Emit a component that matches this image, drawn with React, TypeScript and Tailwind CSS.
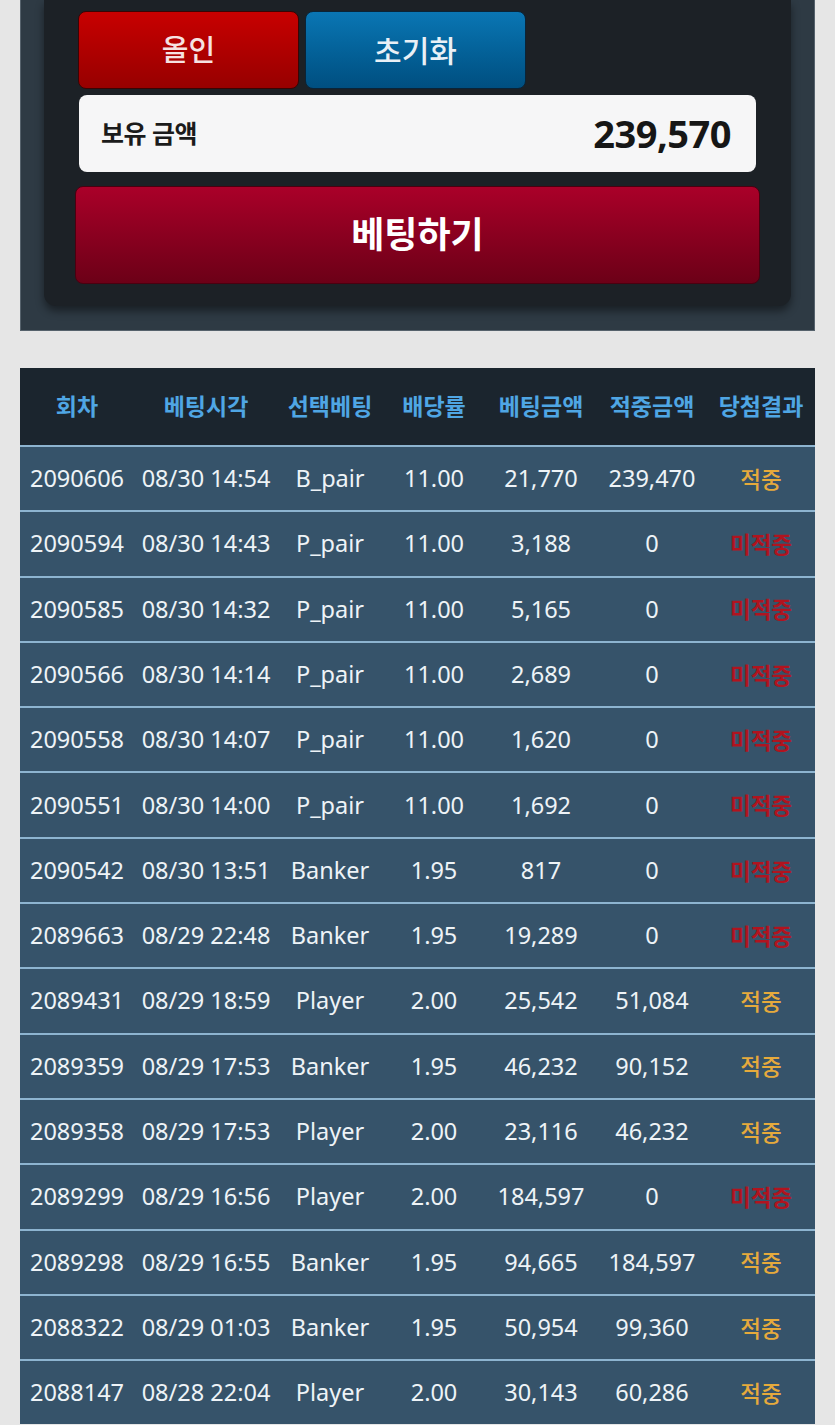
import React from "react"

type Bet = {
	round: string
	time: string
	pick: string
	odds: string
	amount: string
	payout: string
	win: boolean
}

const bets: Bet[] = [
	{ round: "2090606", time: "08/30 14:54", pick: "B_pair", odds: "11.00", amount: "21,770", payout: "239,470", win: true },
	{ round: "2090594", time: "08/30 14:43", pick: "P_pair", odds: "11.00", amount: "3,188", payout: "0", win: false },
	{ round: "2090585", time: "08/30 14:32", pick: "P_pair", odds: "11.00", amount: "5,165", payout: "0", win: false },
	{ round: "2090566", time: "08/30 14:14", pick: "P_pair", odds: "11.00", amount: "2,689", payout: "0", win: false },
	{ round: "2090558", time: "08/30 14:07", pick: "P_pair", odds: "11.00", amount: "1,620", payout: "0", win: false },
	{ round: "2090551", time: "08/30 14:00", pick: "P_pair", odds: "11.00", amount: "1,692", payout: "0", win: false },
	{ round: "2090542", time: "08/30 13:51", pick: "Banker", odds: "1.95", amount: "817", payout: "0", win: false },
	{ round: "2089663", time: "08/29 22:48", pick: "Banker", odds: "1.95", amount: "19,289", payout: "0", win: false },
	{ round: "2089431", time: "08/29 18:59", pick: "Player", odds: "2.00", amount: "25,542", payout: "51,084", win: true },
	{ round: "2089359", time: "08/29 17:53", pick: "Banker", odds: "1.95", amount: "46,232", payout: "90,152", win: true },
	{ round: "2089358", time: "08/29 17:53", pick: "Player", odds: "2.00", amount: "23,116", payout: "46,232", win: true },
	{ round: "2089299", time: "08/29 16:56", pick: "Player", odds: "2.00", amount: "184,597", payout: "0", win: false },
	{ round: "2089298", time: "08/29 16:55", pick: "Banker", odds: "1.95", amount: "94,665", payout: "184,597", win: true },
	{ round: "2088322", time: "08/29 01:03", pick: "Banker", odds: "1.95", amount: "50,954", payout: "99,360", win: true },
	{ round: "2088147", time: "08/28 22:04", pick: "Player", odds: "2.00", amount: "30,143", payout: "60,286", win: true },
]

const headers = ["회차", "베팅시각", "선택베팅", "배당률", "베팅금액", "적중금액", "당첨결과"]

const cols = "grid grid-cols-[114px_144px_104px_104px_110px_112px_106px]"

function BetPanel() {
	return (
		<div className="border-x border-b border-[#56626c] bg-[#2e3a44] px-[23px] pb-[24px]">
			<div className="rounded-b-[12px] bg-[#1c2126] px-[34px] pt-[11px] pb-[22px] shadow-[0_5px_8px_rgba(0,0,0,0.45)]">
				<div className="flex gap-[6px]">
					<button className="flex h-[78px] w-[221px] items-center justify-center rounded-[8px] border border-[#3a0404] bg-gradient-to-b from-[#c80000] to-[#970000] text-[29px] font-medium text-[#f6e2e2]">
						올인
					</button>
					<button className="flex h-[78px] w-[221px] items-center justify-center rounded-[8px] border border-[#0a2438] bg-gradient-to-b from-[#0a76b4] to-[#004f80] text-[30px] font-medium text-[#e9f0f6]">
						초기화
					</button>
				</div>
				<div className="mx-[1px] mt-[6px] flex h-[77px] items-center justify-between rounded-[8px] bg-[#f6f6f7] pr-[25px] pl-[22px]">
					<span className="text-[25px] font-bold tracking-[-0.5px] text-[#1b1b1b]">보유 금액</span>
					<span className="text-[38px] font-bold tracking-[-0.5px] text-[#161616]">239,570</span>
				</div>
				<button className="-mx-[3px] mt-[14px] flex h-[98px] w-[calc(100%+6px)] items-center justify-center rounded-[8px] border border-[#4a0010] bg-gradient-to-b from-[#aa0029] to-[#6c0017] text-[36px] font-bold text-white">
					베팅하기
				</button>
			</div>
		</div>
	)
}

function HistoryTable() {
	return (
		<div className="mt-[37px] bg-[#36536a]">
			<div className={`${cols} h-[77px] items-center bg-[#1b252e] text-center text-[23px] font-bold text-[#4fa6e4]`}>
				{headers.map((h) => (
					<div key={h}>{h}</div>
				))}
			</div>
			{bets.map((b) => (
				<div
					key={b.round}
					className={`${cols} h-[65.3px] items-center border-t-2 border-[#8db4d0] text-center text-[23.5px] text-[#eef3f7]`}
				>
					<div>{b.round}</div>
					<div>{b.time}</div>
					<div>{b.pick}</div>
					<div>{b.odds}</div>
					<div>{b.amount}</div>
					<div>{b.payout}</div>
					<div
						className={`text-[22.5px] ${b.win ? "font-medium text-[#e6aa3c]" : "font-bold text-[#b0141f]"}`}
						style={{ fontFamily: '"Noto Sans CJK KR", sans-serif' }}
					>
						{b.win ? "적중" : "미적중"}
					</div>
				</div>
			))}
		</div>
	)
}

export default function App() {
	return (
		<div
			className="min-h-screen overflow-hidden bg-[#e6e6e6] px-[20px] pb-[40px]"
			style={{ fontFamily: '"Noto Sans", "Noto Sans CJK KR", sans-serif' }}
		>
			<div className="w-[795px]">
				<BetPanel />
				<HistoryTable />
			</div>
		</div>
	)
}
